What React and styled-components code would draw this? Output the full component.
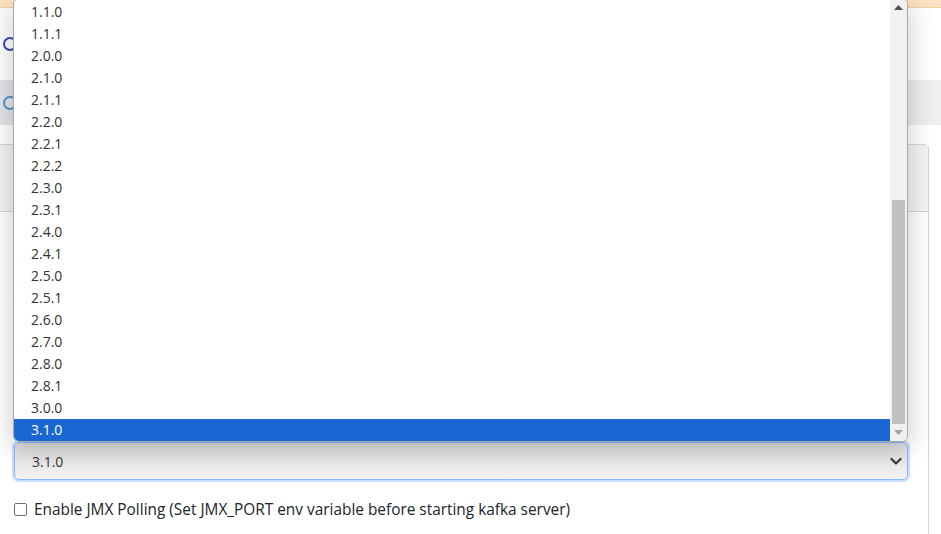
import React from 'react';
import styled, { createGlobalStyle } from 'styled-components';

const GlobalStyle = createGlobalStyle`
  html, body {
    margin: 0;
    padding: 0;
    background: #ffffff;
    font-family: "Open Sans", "Noto Sans", Arial, sans-serif;
    color: #212529;
    overflow: hidden;
  }
`;

const versions = [
  '1.1.0', '1.1.1', '2.0.0', '2.1.0', '2.1.1', '2.2.0', '2.2.1', '2.2.2',
  '2.3.0', '2.3.1', '2.4.0', '2.4.1', '2.5.0', '2.5.1', '2.6.0', '2.7.0',
  '2.8.0', '2.8.1', '3.0.0', '3.1.0',
];

const Page = styled.div`
  position: relative;
  width: 941px;
  height: 534px;
  overflow: hidden;
  display: flex;
  flex-direction: column;
`;

const AlertStrip = styled.div`
  height: 7px;
  background: #fde3c1;
  border-bottom: 1px solid #f3cfa0;
`;

const TopBar = styled.div`
  height: 72px;
  display: flex;
  align-items: center;
  padding-left: 3px;
`;

const Circle = styled.span`
  width: 14px;
  height: 14px;
  border-radius: 50%;
  border: 2px solid ${p => p.color};
  box-sizing: border-box;
`;

const NavBand = styled.div`
  height: 45px;
  background: linear-gradient(90deg, #e3e6e9, #e6e8eb 90%, #eef0f2);
  display: flex;
  align-items: center;
  padding-left: 3px;
`;

const Spacer = styled.div`
  height: 19px;
`;

const Card = styled.div`
  flex: 1;
  margin-right: 12px;
  margin-left: -10px;
  border: 1px solid #d6d6d6;
  border-bottom: none;
  border-radius: 5px 5px 0 0;
  display: flex;
  flex-direction: column;
`;

const CardHeader = styled.div`
  height: 66px;
  background: #f4f4f4;
  border-bottom: 1px solid #d2d2d2;
`;

const CardBody = styled.div`
  flex: 1;
  padding: 230px 20px 0 23px;
  display: flex;
  flex-direction: column;
`;

const SelectBox = styled.div`
  height: 38px;
  box-sizing: border-box;
  border: 1px solid #86b7fe;
  border-radius: 5px;
  box-shadow: 0 0 0 2px rgba(134, 183, 254, 0.45);
  background: linear-gradient(#dedede, #ececec 60%, #f2f2f2);
  display: flex;
  align-items: center;
  justify-content: space-between;
  padding: 0 5px 0 17px;
  font-size: 14px;
  color: #333;
`;

const CheckRow = styled.label`
  display: flex;
  align-items: center;
  gap: 7px;
  margin-top: 19px;
  font-size: 15.4px;
  color: #212529;
`;

const Check = styled.span`
  width: 13px;
  height: 13px;
  box-sizing: border-box;
  border: 1px solid #6f6f6f;
  border-radius: 2px;
  background: #fff;
`;

const Dropdown = styled.div`
  position: absolute;
  left: 13px;
  top: -2px;
  width: 895px;
  height: 444px;
  box-sizing: border-box;
  background: #fff;
  border: 1px solid #a9a9a9;
  border-radius: 6px;
  box-shadow: 0 6px 28px rgba(0, 0, 0, 0.22);
  display: flex;
  overflow: hidden;
`;

const List = styled.div`
  flex: 1;
  display: flex;
  flex-direction: column;
  justify-content: flex-end;
`;

const Option = styled.div`
  height: 22px;
  flex: none;
  line-height: 22px;
  padding-left: 17px;
  font-size: 14px;
  color: ${p => (p.$selected ? '#ffffff' : '#333333')};
  background: ${p => (p.$selected ? '#1a67d4' : 'transparent')};
`;

const Scrollbar = styled.div`
  width: 17px;
  background: #f1f1f1;
  display: flex;
  flex-direction: column;
  align-items: center;
`;

const Arrow = styled.div`
  height: 17px;
  display: flex;
  align-items: center;
  justify-content: center;
`;

const Track = styled.div`
  flex: 1;
  width: 100%;
  display: flex;
  flex-direction: column;
  justify-content: flex-end;
  align-items: center;
`;

const Thumb = styled.div`
  width: 13px;
  height: 224px;
  background: #c1c1c1;
`;

const Chevron = () => (
  <svg width="12" height="10" viewBox="0 0 12 10">
    <path d="M1.5 3 L6 7.5 L10.5 3" fill="none" stroke="#343a40" strokeWidth="2.2" strokeLinecap="round" strokeLinejoin="round" />
  </svg>
);

const Tri = ({ up, color }) => (
  <svg width="9" height="5" viewBox="0 0 9 5">
    <path d={up ? 'M0 5 L4.5 0 L9 5 Z' : 'M0 0 L4.5 5 L9 0 Z'} fill={color} />
  </svg>
);

export default function App() {
  return (
    <>
      <GlobalStyle />
      <Page>
        <AlertStrip />
        <TopBar>
          <Circle color="#3b48b8" />
        </TopBar>
        <NavBand>
          <Circle color="#5b8fd8" />
        </NavBand>
        <Spacer />
        <Card>
          <CardHeader />
          <CardBody>
            <SelectBox>
              <span>3.1.0</span>
              <Chevron />
            </SelectBox>
            <CheckRow>
              <Check />
              Enable JMX Polling (Set JMX_PORT env variable before starting kafka server)
            </CheckRow>
          </CardBody>
        </Card>

        <Dropdown>
          <List>
            {versions.map(v => (
              <Option key={v} $selected={v === '3.1.0'}>{v}</Option>
            ))}
          </List>
          <Scrollbar>
            <Arrow><Tri up color="#505050" /></Arrow>
            <Track><Thumb /></Track>
            <Arrow><Tri color="#a3a3a3" /></Arrow>
          </Scrollbar>
        </Dropdown>
      </Page>
    </>
  );
}
